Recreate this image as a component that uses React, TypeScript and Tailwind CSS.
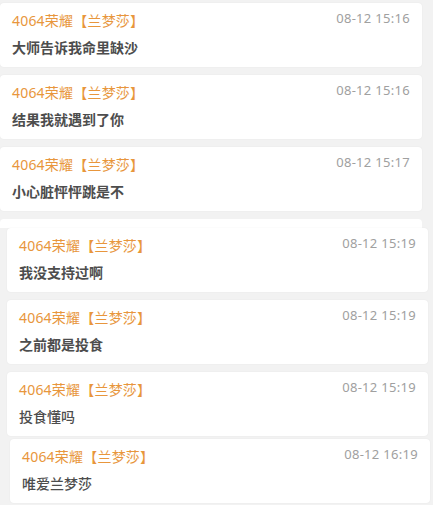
interface Msg {
  time: string
  text: string
  heavy: boolean
}

const first: Msg[] = [
  { time: '08-12 15:16', text: '大师告诉我命里缺沙', heavy: true },
  { time: '08-12 15:16', text: '结果我就遇到了你', heavy: true },
  { time: '08-12 15:17', text: '小心脏怦怦跳是不', heavy: true },
]

const second: Msg[] = [
  { time: '08-12 15:19', text: '我没支持过啊', heavy: true },
  { time: '08-12 15:19', text: '之前都是投食', heavy: true },
  { time: '08-12 15:19', text: '投食懂吗', heavy: false },
]

const last: Msg = { time: '08-12 16:19', text: '唯爱兰梦莎', heavy: false }

function Card({ msg }: { msg: Msg }) {
  return (
    <div className="h-[64px] bg-white rounded-[4px] px-3 pt-[7px] shadow-[0_0_2px_rgba(0,0,0,0.06)]">
      <div className="flex items-center justify-between h-[20px]">
        <span className="text-[14px] text-[#e8963c] tracking-[0.2px]">4064荣耀【兰梦莎】</span>
        <span className="text-[13px] text-[#a0a0a0] -mt-[2px] tracking-[0.3px]">{msg.time}</span>
      </div>
      <div className={`mt-[8px] h-[20px] leading-[20px] text-[14px] text-[#4d4d4d] ${msg.heavy ? 'font-bold' : 'font-medium'}`}>
        {msg.text}
      </div>
    </div>
  )
}

export default function App() {
  return (
    <div className="w-[433px] h-[505px] overflow-hidden bg-[#f2f2f2] font-['Noto_Sans','Noto_Sans_CJK_SC',sans-serif]">
      <div className="w-[422px] pt-[3px] flex flex-col gap-[8px]">
        {first.map((m, i) => (
          <Card key={i} msg={m} />
        ))}
      </div>
      <div className="w-[422px] h-[9px] mt-[8px] bg-white rounded-t-[4px]" />
      <div className="ml-[7px] w-[421px] flex flex-col gap-[8px]">
        {second.map((m, i) => (
          <Card key={i} msg={m} />
        ))}
      </div>
      <div className="ml-[10px] w-[420px] mt-[3px]">
        <Card msg={last} />
      </div>
    </div>
  )
}
